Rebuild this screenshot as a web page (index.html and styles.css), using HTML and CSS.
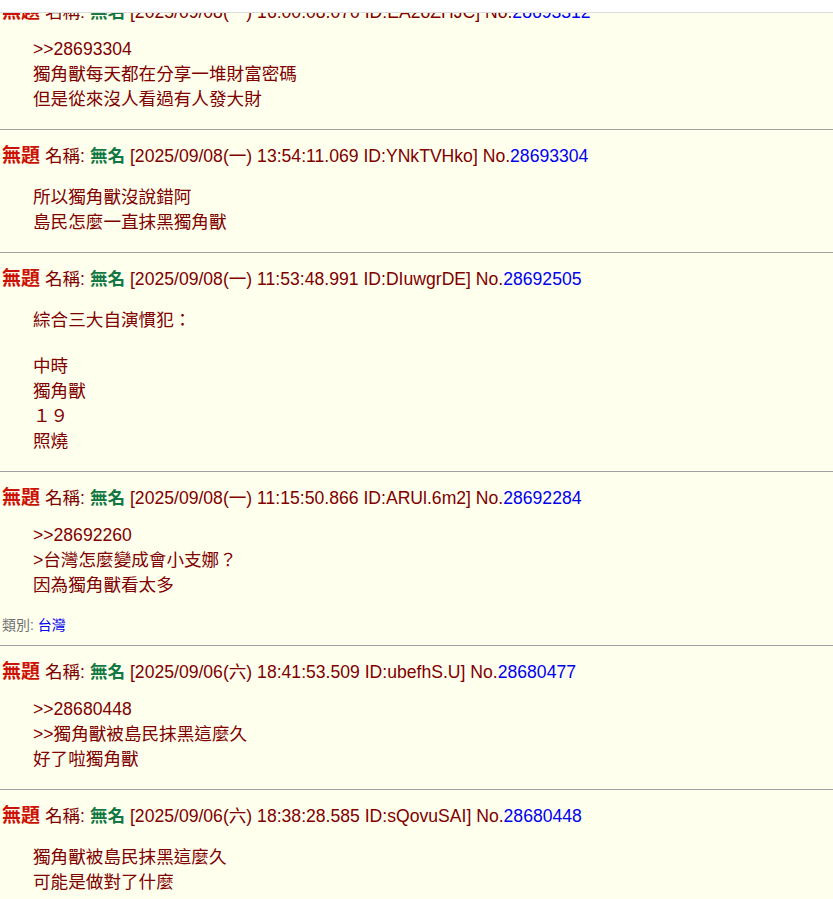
FILE: index.html
```html
<!DOCTYPE html>
<html lang="zh-Hant">
<head>
    <meta charset="UTF-8">
    <meta name="viewport" content="width=device-width, initial-scale=1.0">
    <title>綜合</title>
    <link rel="stylesheet" href="styles.css">
</head>
<body>
    <div class="topbar"></div>

    <div class="thread">
        <div class="post first">
            <div class="post-head">
                <span class="title">無題</span> 名稱: <span class="name">無名</span> [2025/09/08(一) 16:00:08.070 ID:EA2oZHJC] No.<a href="#">28693312</a>
            </div>
            <div class="quote">
                &gt;&gt;28693304<br>
                獨角獸每天都在分享一堆財富密碼<br>
                但是從來沒人看過有人發大財
            </div>
        </div>
        <hr>

        <div class="post">
            <div class="post-head">
                <span class="title">無題</span> 名稱: <span class="name">無名</span> [2025/09/08(一) 13:54:11.069 ID:YNkTVHko] No.<a href="#">28693304</a>
            </div>
            <div class="quote">
                所以獨角獸沒說錯阿<br>
                島民怎麼一直抹黑獨角獸
            </div>
        </div>
        <hr>

        <div class="post">
            <div class="post-head">
                <span class="title">無題</span> 名稱: <span class="name">無名</span> [2025/09/08(一) 11:53:48.991 ID:DIuwgrDE] No.<a href="#">28692505</a>
            </div>
            <div class="quote">
                綜合三大自演慣犯：<br>
                <br>
                中時<br>
                獨角獸<br>
                １９<br>
                照燒
            </div>
        </div>
        <hr>

        <div class="post">
            <div class="post-head">
                <span class="title">無題</span> 名稱: <span class="name">無名</span> [2025/09/08(一) 11:15:50.866 ID:ARUl.6m2] No.<a href="#">28692284</a>
            </div>
            <div class="quote">
                &gt;&gt;28692260<br>
                &gt;台灣怎麼變成會小支娜？<br>
                因為獨角獸看太多
            </div>
            <div class="category">類別: <a href="#">台灣</a></div>
        </div>
        <hr>

        <div class="post">
            <div class="post-head">
                <span class="title">無題</span> 名稱: <span class="name">無名</span> [2025/09/06(六) 18:41:53.509 ID:ubefhS.U] No.<a href="#">28680477</a>
            </div>
            <div class="quote">
                &gt;&gt;28680448<br>
                &gt;&gt;獨角獸被島民抹黑這麼久<br>
                好了啦獨角獸
            </div>
        </div>
        <hr>

        <div class="post">
            <div class="post-head">
                <span class="title">無題</span> 名稱: <span class="name">無名</span> [2025/09/06(六) 18:38:28.585 ID:sQovuSAI] No.<a href="#">28680448</a>
            </div>
            <div class="quote">
                獨角獸被島民抹黑這麼久<br>
                可能是做對了什麼
            </div>
        </div>
        <hr>
    </div>
</body>
</html>
```

FILE: styles.css
```css
body {
    margin: 0;
    background: #ffffee;
    color: #800000;
    font-family: "Liberation Sans", "Noto Sans CJK TC", sans-serif;
    font-size: 17.6px;
}
a {
    color: #0000ee;
    text-decoration: none;
}
.topbar {
    position: fixed;
    top: 0;
    left: 0;
    right: 0;
    height: 12px;
    background: #fff;
    border-bottom: 1px solid #dcdcdc;
}
.thread {
    margin-top: -4px;
}
.post {
    padding: 10px 2px 0;
}
.post.first {
    padding-top: 0;
}
.title {
    color: #cc1105;
    font-weight: bold;
    font-size: 19px;
}
.name {
    color: #117743;
    font-weight: bold;
}
.quote {
    margin: 16px 0 19px 31px;
}
.category {
    font-size: 14px;
    color: #707070;
    margin: -1px 0 11px;
}
hr {
    margin: 0;
    border: 0;
    border-top: 1px solid #a0a0a0;
}
```
